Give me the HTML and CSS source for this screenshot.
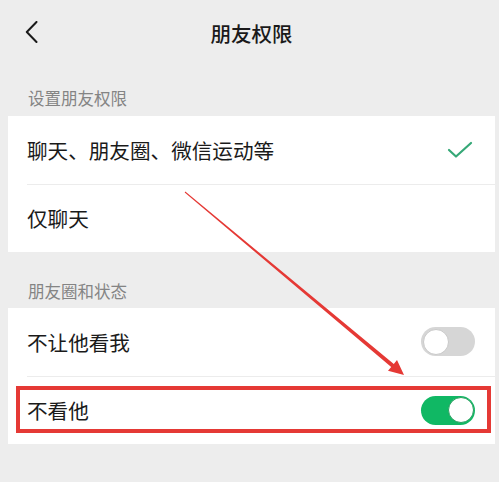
FILE: index.html
```html
<!DOCTYPE html>
<html lang="zh-CN">
<head>
<meta charset="utf-8">
<title>朋友权限</title>
<link rel="stylesheet" href="styles.css">
</head>
<body>
<div class="page">
  <header class="nav">
    <svg class="back" width="14" height="22" viewBox="0 0 14 22"><path d="M11.5 1 L1.8 11 L11.5 21" fill="none" stroke="#1a1a1a" stroke-width="2" stroke-linecap="round" stroke-linejoin="round"/></svg>
    <div class="title">朋友权限</div>
  </header>

  <div class="section-label first">设置朋友权限</div>
  <div class="card">
    <div class="row">
      <span class="text">聊天、朋友圈、微信运动等</span>
      <svg class="check" width="26" height="18" viewBox="0 0 26 18"><path d="M2 9 L9 15.5 L24 2" fill="none" stroke="#35a877" stroke-width="2.2" stroke-linecap="round" stroke-linejoin="round"/></svg>
    </div>
    <div class="divider"></div>
    <div class="row">
      <span class="text">仅聊天</span>
    </div>
  </div>

  <div class="section-label second">朋友圈和状态</div>
  <div class="card">
    <div class="row">
      <span class="text">不让他看我</span>
      <span class="toggle off"><span class="knob"></span></span>
    </div>
    <div class="divider"></div>
    <div class="row">
      <span class="text">不看他</span>
      <span class="toggle on"><span class="knob"></span></span>
    </div>
  </div>

  <div class="highlight"></div>
  <svg class="arrow" width="499" height="482" viewBox="0 0 499 482">
    <path d="M184.7 192.4 L185.3 191.6 L393.8 363.9 L397 360 L404 375 L388 370.8 L391.2 366.9 Z" fill="#e53935"/>
  </svg>
</div>
</body>
</html>
```

FILE: styles.css
```css
* { box-sizing: border-box; }
html, body {
  margin: 0;
  padding: 0;
  background: #ededed;
}
body {
  width: 499px;
  height: 482px;
  overflow: hidden;
  font-family: "Noto Sans CJK SC", "Noto Sans", sans-serif;
  color: #1a1a1a;
}
.page {
  position: relative;
  width: 499px;
  height: 482px;
  padding: 0 4px 0 8px;
}
.nav {
  height: 66px;
  display: flex;
  align-items: center;
  justify-content: center;
  position: relative;
}
.back {
  position: absolute;
  left: 17px;
  top: 21px;
}
.title {
  font-size: 20.5px;
  font-weight: 500;
  line-height: 24px;
  margin-left: 0;
  color: #1a1a1a;
}
.section-label {
  font-size: 16.5px;
  line-height: 20px;
  color: #848484;
  padding-left: 20px;
}
.section-label.first {
  padding-top: 22px;
  padding-bottom: 8px;
}
.section-label.second {
  padding-top: 29px;
  padding-bottom: 7px;
}
.card {
  background: #fff;
}
.row {
  height: 67.5px;
  display: flex;
  align-items: center;
  justify-content: space-between;
  padding: 0 20px 0 19px;
}
.text {
  font-size: 20.6px;
  line-height: 24px;
  color: #1a1a1a;
}
.check {
  margin-right: 2px;
}
.divider {
  height: 1px;
  background: #ececec;
  margin-left: 19px;
}
.toggle {
  width: 54px;
  height: 29px;
  border-radius: 15px;
  position: relative;
  display: block;
}
.toggle.off { background: #d6d6d6; }
.toggle.on { background: #10b864; }
.knob {
  position: absolute;
  top: 1.5px;
  width: 26px;
  height: 26px;
  border-radius: 50%;
  background: #fff;
}
.toggle.off .knob {
  left: 1.5px;
  border: 1px solid #c9c9c9;
}
.toggle.on .knob {
  right: 1.5px;
  border: 1px solid #2a9f60;
}
.highlight {
  position: absolute;
  left: 16px;
  top: 386px;
  width: 475px;
  height: 47px;
  border: 4px solid #e53935;
}
.arrow {
  position: absolute;
  left: 0;
  top: 0;
  pointer-events: none;
}
```
